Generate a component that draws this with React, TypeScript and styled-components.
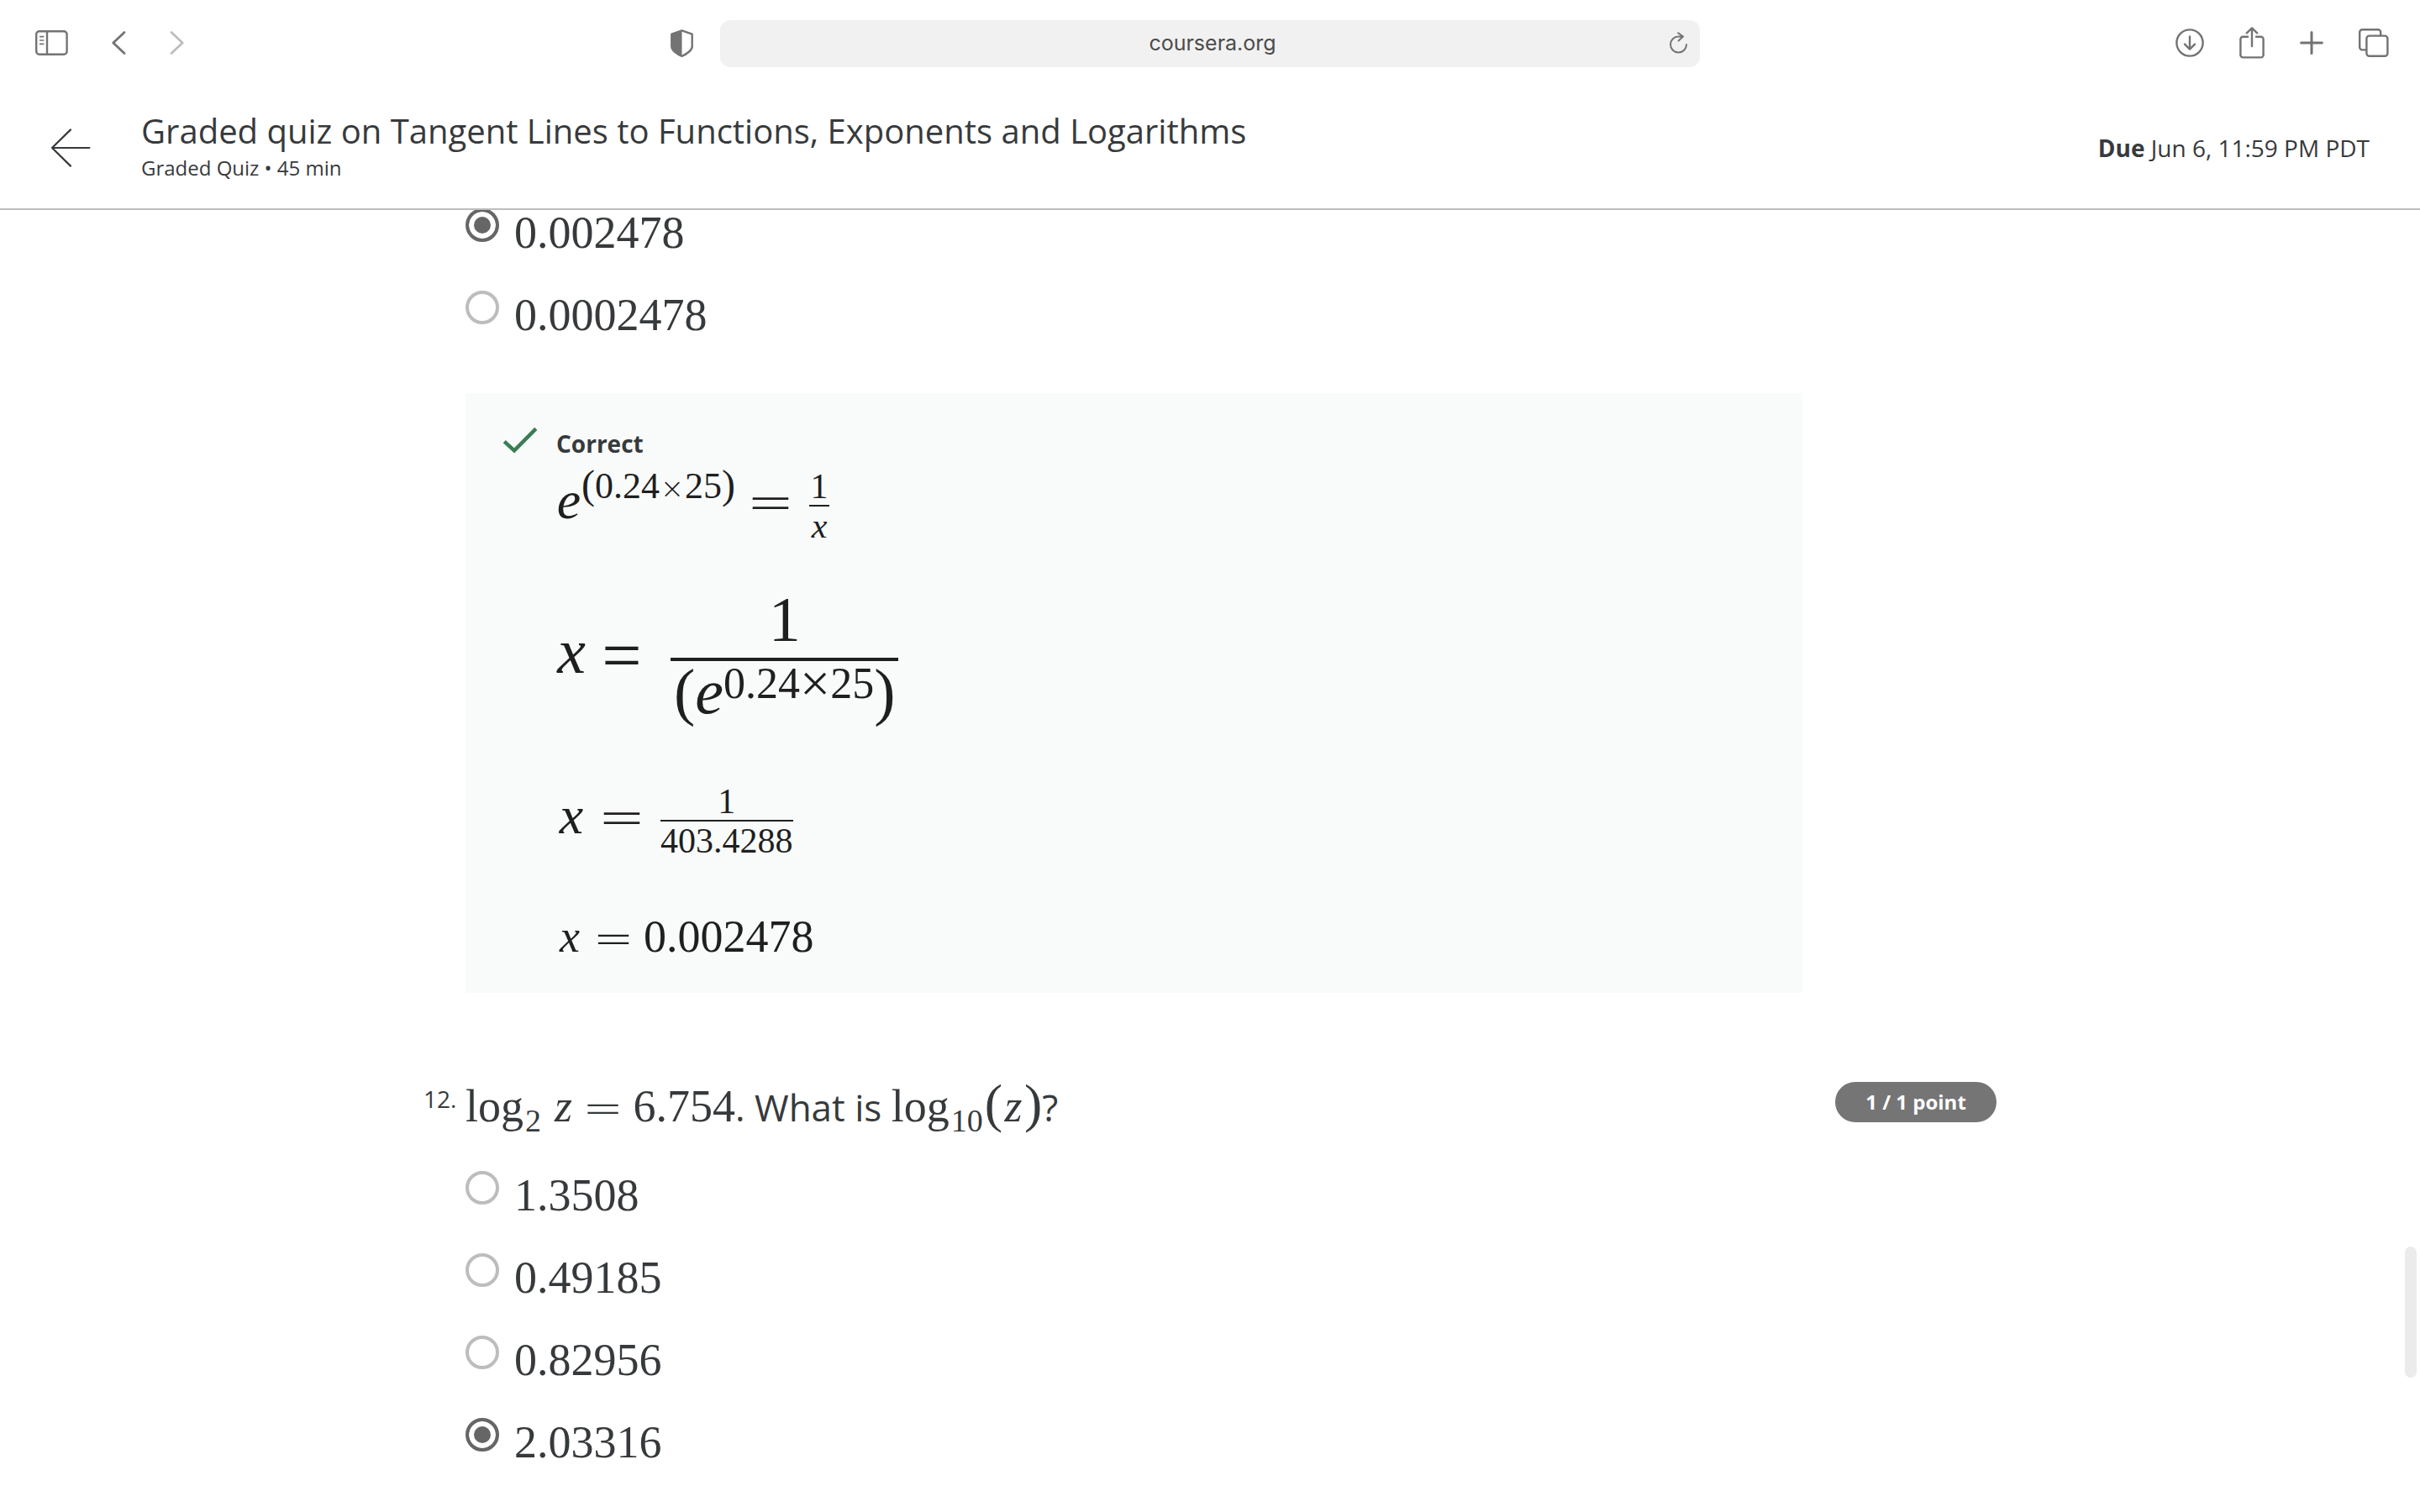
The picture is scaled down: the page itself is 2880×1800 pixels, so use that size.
import React from "react";
import styled, { createGlobalStyle } from "styled-components";

const GlobalStyle = createGlobalStyle`
  *, *::before, *::after { box-sizing: border-box; }
  body {
    margin: 0;
    background: #fff;
    color: #373a3c;
    font-family: "Open Sans", "Noto Sans", sans-serif;
  }
`;

const serif = `"Liberation Serif", "Times New Roman", serif`;

const Page = styled.div`
  position: relative;
  display: flex;
  flex-direction: column;
  height: 100vh;
  overflow: hidden;
`;

/* Browser toolbar */

const Toolbar = styled.nav`
  flex: none;
  display: grid;
  grid-template-columns: 1fr 1166px 1fr;
  align-items: center;
  column-gap: 32px;
  height: 104px;
  padding: 0 37px;
  color: #737373;
`;

const ToolGroup = styled.div<{ $gap: number; $end?: boolean }>`
  display: flex;
  align-items: center;
  gap: ${(p) => p.$gap}px;
  justify-content: ${(p) => (p.$end ? "flex-end" : "flex-start")};
  padding: 0 0 2px ${(p) => (p.$end ? 0 : 5)}px;
`;

const IconButton = styled.button<{ $push?: boolean }>`
  display: flex;
  padding: 0;
  margin-left: ${(p) => (p.$push ? "auto" : "0")};
  border: 0;
  background: none;
  color: inherit;
  cursor: pointer;

  &:disabled {
    color: #bdbdbd;
  }
`;

const AddressBar = styled.div`
  display: flex;
  align-items: center;
  height: 56px;
  padding: 0 14px 2px 42px;
  border-radius: 12px;
  background: #f1f1f1;
`;

const Address = styled.input`
  flex: 1;
  min-width: 0;
  padding: 0;
  border: 0;
  background: none;
  color: #4b4b4b;
  font: 25px/32px Inter, Roboto, sans-serif;
  text-align: center;
`;

/* Quiz header */

const Header = styled.header`
  flex: none;
  display: flex;
  align-items: center;
  padding: 28px 60px;
  border-bottom: 2px solid #bdbdbd;
`;

const Heading = styled.div`
  flex: 1;
  margin-left: 60px;
`;

const Title = styled.h1`
  margin: 0;
  font-size: 40px;
  font-weight: 400;
  line-height: 48px;
`;

const Subtitle = styled.p`
  margin: 0;
  font-size: 24px;
  line-height: 40px;
`;

const Due = styled.p`
  margin: 0;
  font-size: 28px;
  line-height: 40px;
`;

/* Quiz body */

const Main = styled.main`
  flex: 1;
  min-height: 0;
  overflow: hidden;
`;

const Quiz = styled.div`
  width: min(1872px, 100%);
  margin: -2px auto 0;
`;

const Question = styled.section`
  display: grid;
  grid-template-columns: 50px minmax(0, 1fr) 192px;
  align-items: start;

  & + & {
    margin-top: 106px;
  }
`;

const QuestionBody = styled.div`
  grid-column: 2;
  padding-right: 39px;
`;

const QuestionNumber = styled.span`
  font-size: 28px;
  line-height: 40px;
`;

const Prompt = styled.p`
  margin: 0 0 46px;
  font-size: 44px;
  line-height: 60px;
  white-space: nowrap;
`;

const Points = styled.span`
  display: block;
  border-radius: 24px;
  background: #757575;
  color: #fff;
  font-size: 24px;
  font-weight: 700;
  line-height: 48px;
  text-align: center;
`;

const Options = styled.div`
  display: flex;
  flex-direction: column;
  gap: 40px;
`;

const Option = styled.label`
  display: flex;
  align-items: flex-start;
  gap: 18px;
  font: 54px/58px ${serif};
`;

const Radio = styled.input`
  flex: none;
  appearance: none;
  width: 40px;
  height: 40px;
  margin: 0;
  border: 4px solid #bdbdbd;
  border-radius: 50%;
  background: #fff;

  &:checked {
    border-color: #666;
    background: #666;
    box-shadow: inset 0 0 0 6px #fff;
  }
`;

const Feedback = styled.div`
  display: flex;
  align-items: flex-start;
  gap: 22px;
  margin-top: 64px;
  padding: 40px 44px 38px;
  background: #f9fbfa;
`;

const Verdict = styled.p`
  margin: 0;
  font-size: 28px;
  font-weight: 700;
  line-height: 40px;
`;

const Steps = styled.div`
  display: flex;
  flex-direction: column;
  gap: 64px;
  color: #1f1f1f;
`;

/* Formula parts */

const Formula = styled.div<{ $size: number; $line: number }>`
  font: ${(p) => p.$size}px/${(p) => p.$line}px ${serif};
  white-space: nowrap;
`;

const Num = styled.span`
  font: 54px/58px ${serif};
`;

const Variable = styled.i<{ $width: number }>`
  display: inline-block;
  width: ${(p) => p.$width}px;
  text-align: center;
`;

const Sup = styled.span<{ $size: number; $raise: number }>`
  font-size: ${(p) => p.$size}px;
  line-height: 0;
  vertical-align: ${(p) => p.$raise}px;
`;

const Sub = styled.span`
  margin: 0 2px;
  font-size: 38px;
  line-height: 0;
  vertical-align: -12px;
`;

const Paren = styled.span<{ $size: number }>`
  font-size: ${(p) => p.$size}px;
  line-height: 0;
`;

const Operator = styled.span<{ $size: number; $width: number }>`
  display: inline-block;
  width: ${(p) => p.$width}px;
  font: 200 ${(p) => p.$size}px/0 "DejaVu Sans Light", "DejaVu Sans", sans-serif;
  text-align: center;
  vertical-align: -4px;
`;

const Times = styled.span`
  display: inline-block;
  width: 30px;
  font: 200 34px/0 "DejaVu Sans Light", "DejaVu Sans", sans-serif;
  text-align: center;
`;

const LargeTimes = styled.span`
  font-size: 64px;
  line-height: 0;
  vertical-align: -4px;
`;

const BoldEquals = styled.span`
  display: inline-block;
  width: 84px;
  font-size: 84px;
  line-height: 0;
  text-align: center;
  vertical-align: -8px;
`;

const Fraction = styled.span`
  display: inline-flex;
  flex-direction: column;
  margin-left: 4px;
  font-size: 42px;
  line-height: 42px;
  text-align: center;
  vertical-align: 24px;
`;

const Denominator = styled.span`
  margin-top: 1px;
  padding-top: 2px;
  border-top: 2px solid;
`;

const LargeFraction = styled.span`
  display: inline-flex;
  flex-direction: column;
  margin-left: 16px;
  line-height: 52px;
  text-align: center;
  vertical-align: 38px;
`;

const LargeDenominator = styled.span`
  margin-top: 20px;
  padding: 0 4px;
  border-top: 4px solid;
  line-height: 72px;
`;

/* Overlay scroll thumb */

const ScrollThumb = styled.div`
  position: absolute;
  right: 4px;
  bottom: 160px;
  width: 14px;
  height: 156px;
  border-radius: 7px;
  background: #ebebeb;
`;

type IconProps = { w: number; h: number; stroke?: number; children: React.ReactNode };

const Icon = ({ w, h, stroke = 2.4, children }: IconProps) => (
  <svg
    width={w}
    height={h}
    viewBox={`0 0 ${w} ${h}`}
    fill="none"
    stroke="currentColor"
    strokeWidth={stroke}
    strokeLinecap="round"
    strokeLinejoin="round"
    aria-hidden="true"
  >
    {children}
  </svg>
);

type ChoiceProps = { name: string; values: string[]; selected: string };

const Choices = ({ name, values, selected }: ChoiceProps) => (
  <Options role="radiogroup">
    {values.map((value) => (
      <Option key={value}>
        <Radio type="radio" name={name} value={value} defaultChecked={value === selected} />
        <span>{value}</span>
      </Option>
    ))}
  </Options>
);

export default function App() {
  return (
    <>
      <GlobalStyle />
      <Page>
        <Toolbar>
          <ToolGroup $gap={52}>
            <IconButton aria-label="Show sidebar">
              <Icon w={39} h={30} stroke={2.4}>
                <rect x="1.2" y="1.2" width="36.4" height="27.6" rx="3.6" />
                <path d="M14 1v28" />
                <path d="M5.6 7.6h4.2M5.6 12h4.2M5.6 16.4h4.2" strokeWidth="1.6" />
              </Icon>
            </IconButton>
            <IconButton aria-label="Back">
              <Icon w={17} h={28} stroke={2.8}>
                <path d="M15 1.6L1.8 14L15 26.4" />
              </Icon>
            </IconButton>
            <IconButton aria-label="Forward" disabled>
              <Icon w={17} h={28} stroke={2.8}>
                <path d="M2 1.6L15.2 14L2 26.4" />
              </Icon>
            </IconButton>
            <IconButton aria-label="Privacy report" $push>
              <Icon w={27} h={33} stroke={2.4}>
                <path d="M13.5 1.3L25.7 5.6V20.4C25.7 24.6 19.5 29.3 13.5 31.8C7.5 29.3 1.3 24.6 1.3 20.4V5.6Z" />
                <path d="M13.5 1.3V31.8C7.5 29.3 1.3 24.6 1.3 20.4V5.6Z" fill="currentColor" stroke="none" />
              </Icon>
            </IconButton>
          </ToolGroup>
          <AddressBar>
            <Address aria-label="Address" defaultValue="coursera.org" />
            <IconButton aria-label="Reload">
              <Icon w={22} h={26} stroke={2}>
                <path d="M20 15A9.5 9.5 0 1 1 10.5 5.5H15.6M10.2 1.2L16 5.5L10.6 10.6" />
              </Icon>
            </IconButton>
          </AddressBar>
          <ToolGroup $gap={42} $end>
            <IconButton aria-label="Downloads">
              <Icon w={34} h={34} stroke={2.4}>
                <circle cx="17" cy="17" r="15.6" />
                <path d="M17 9.4V24.4M11 18.6L17 24.6L23 18.6" />
              </Icon>
            </IconButton>
            <IconButton aria-label="Share">
              <Icon w={30} h={38} stroke={2.4}>
                <path d="M10 11.8H4.4A3 3 0 0 0 1.4 14.8V33.4A3 3 0 0 0 4.4 36.4H25.6A3 3 0 0 0 28.6 33.4V14.8A3 3 0 0 0 25.6 11.8H20" />
                <path d="M15 1.6V23M8.8 7.4L15 1.4L21.2 7.4" />
              </Icon>
            </IconButton>
            <IconButton aria-label="New tab">
              <Icon w={28} h={28} stroke={3}>
                <path d="M14 1.6V26.4M1.6 14H26.4" />
              </Icon>
            </IconButton>
            <IconButton aria-label="Tab overview">
              <Icon w={36} h={34} stroke={2.4}>
                <rect x="9.4" y="8.6" width="25" height="24.2" rx="3.4" />
                <path d="M9 25.4H4.4A3.2 3.2 0 0 1 1.2 22.2V4.4A3.2 3.2 0 0 1 4.4 1.2H23A3.2 3.2 0 0 1 26.2 4.4V8" />
              </Icon>
            </IconButton>
          </ToolGroup>
        </Toolbar>

        <Header>
          <IconButton aria-label="Back to course">
            <Icon w={48} h={46} stroke={2.2}>
              <path d="M24 1.4L2 23L24 44.6M2 23H46.4" />
            </Icon>
          </IconButton>
          <Heading>
            <Title>Graded quiz on Tangent Lines to Functions, Exponents and Logarithms</Title>
            <Subtitle>Graded Quiz • 45 min</Subtitle>
          </Heading>
          <Due>
            <b>Due</b> Jun 6, 11:59 PM PDT
          </Due>
        </Header>

        <Main>
          <Quiz>
            <Question>
              <QuestionBody>
                <Choices name="question-11" values={["0.002478", "0.0002478"]} selected="0.002478" />
                <Feedback>
                  <Icon w={42} h={32} stroke={4.4}>
                    <path
                      d="M2.2 17.6L14 28.4L39.8 2.4"
                      stroke="#3a7d54"
                      strokeLinecap="butt"
                      strokeLinejoin="miter"
                    />
                  </Icon>
                  <div>
                    <Verdict>Correct</Verdict>
                    <Steps>
                      <Formula $size={64} $line={96}>
                        <Variable $width={30}>e</Variable>
                        <Sup $size={44} $raise={24}>
                          <Paren $size={48}>(</Paren>0.24
                          <Times>×</Times>
                          25<Paren $size={48}>)</Paren>
                        </Sup>
                        <Operator $size={68} $width={84}>=</Operator>
                        <Fraction>
                          <span>1</span>
                          <Denominator>
                            <Variable $width={24}>x</Variable>
                          </Denominator>
                        </Fraction>
                      </Formula>
                      <Formula $size={76} $line={76}>
                        <Variable $width={36}>x</Variable>
                        <BoldEquals>=</BoldEquals>
                        <LargeFraction>
                          <span>1</span>
                          <LargeDenominator>
                            (<i>e</i>
                            <Sup $size={52} $raise={18}>
                              0.24<LargeTimes>×</LargeTimes>25
                            </Sup>
                            )
                          </LargeDenominator>
                        </LargeFraction>
                      </Formula>
                      <Formula $size={64} $line={96}>
                        <Variable $width={36}>x</Variable>
                        <Operator $size={68} $width={84}>=</Operator>
                        <Fraction>
                          <span>1</span>
                          <Denominator>403.4288</Denominator>
                        </Fraction>
                      </Formula>
                      <Formula $size={54} $line={58}>
                        <Variable $width={32}>x</Variable>
                        <Operator $size={58} $width={72}>=</Operator>
                        0.002478
                      </Formula>
                    </Steps>
                  </div>
                </Feedback>
              </QuestionBody>
            </Question>

            <Question>
              <QuestionNumber>12.</QuestionNumber>
              <QuestionBody>
                <Prompt>
                  <Num>
                    log<Sub>2</Sub> <Variable $width={22}>z</Variable>
                    <Operator $size={58} $width={72}>=</Operator>
                    6.754
                  </Num>
                  . What is{" "}
                  <Num>
                    log<Sub>10</Sub>
                    <Paren $size={64}>(</Paren>
                    <Variable $width={26}>z</Variable>
                    <Paren $size={64}>)</Paren>
                  </Num>
                  ?
                </Prompt>
                <Choices
                  name="question-12"
                  values={["1.3508", "0.49185", "0.82956", "2.03316"]}
                  selected="2.03316"
                />
              </QuestionBody>
              <Points>1 / 1 point</Points>
            </Question>
          </Quiz>
        </Main>
        <ScrollThumb />
      </Page>
    </>
  );
}
